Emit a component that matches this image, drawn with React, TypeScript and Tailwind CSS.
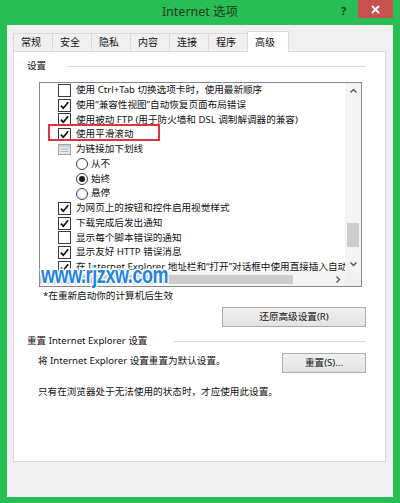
import React from "react";

// --- Internet 选项 / 高级 tab (Windows 8 style dialog, green frame) ---

type Row =
  | { kind: "check"; text: string; checked: boolean }
  | { kind: "group"; text: string }
  | { kind: "radio"; text: string; checked: boolean };

const rows: Row[] = [
  { kind: "check", text: "使用 Ctrl+Tab 切换选项卡时，使用最新顺序", checked: false },
  { kind: "check", text: "使用“兼容性视图”自动恢复页面布局错误", checked: true },
  { kind: "check", text: "使用被动 FTP (用于防火墙和 DSL 调制解调器的兼容)", checked: true },
  { kind: "check", text: "使用平滑滚动", checked: true },
  { kind: "group", text: "为链接加下划线" },
  { kind: "radio", text: "从不", checked: false },
  { kind: "radio", text: "始终", checked: true },
  { kind: "radio", text: "悬停", checked: false },
  { kind: "check", text: "为网页上的按钮和控件启用视觉样式", checked: true },
  { kind: "check", text: "下载完成后发出通知", checked: true },
  { kind: "check", text: "显示每个脚本错误的通知", checked: false },
  { kind: "check", text: "显示友好 HTTP 错误消息", checked: true },
  { kind: "check", text: "在 Internet Explorer 地址栏和“打开”对话框中使用直接插入自动完成", checked: true },
];

const tabs = ["常规", "安全", "隐私", "内容", "连接", "程序", "高级"];
const tabWidths = ["w-[40px]", "w-[40px]", "w-[40px]", "w-[40px]", "w-[40px]", "w-[40px]", "w-[42px]"];

const Checkbox = ({ checked }: { checked: boolean }) => (
  <span className="w-[13px] h-[13px] border border-[#3c3c3c] bg-white flex items-center justify-center shrink-0">
    {checked && (
      <svg width="11" height="11" viewBox="0 0 11 11">
        <path d="M1.8 5.6 L4.3 8.2 L9.2 2.2" fill="none" stroke="#111" strokeWidth="1.7" />
      </svg>
    )}
  </span>
);

const Radio = ({ checked }: { checked: boolean }) => (
  <span className="w-[12px] h-[12px] rounded-full border border-[#3c3c3c] bg-white flex items-center justify-center shrink-0">
    {checked && <span className="w-[6px] h-[6px] rounded-full bg-[#1a1a1a]" />}
  </span>
);

const GroupIcon = () => (
  <svg width="13" height="11" viewBox="0 0 13 11" className="shrink-0">
    <rect x="0.5" y="0.5" width="12" height="10" fill="#e4e8ee" stroke="#9aa3ae" />
    <rect x="1" y="1" width="11" height="2" fill="#c7cfd9" />
    <line x1="2.5" y1="5" x2="10.5" y2="5" stroke="#aeb6c0" />
    <line x1="2.5" y1="7.5" x2="10.5" y2="7.5" stroke="#aeb6c0" />
  </svg>
);

const Chevron = ({ dir }: { dir: "up" | "down" | "right" }) => {
  const d =
    dir === "up" ? "M1.5 5.5 L4.5 2.5 L7.5 5.5" : dir === "down" ? "M1.5 2.5 L4.5 5.5 L7.5 2.5" : "M2.5 1.5 L5.5 4.5 L2.5 7.5";
  return (
    <svg width="9" height="9" viewBox="0 0 9 9">
      <path d={d} fill="none" stroke="#555" strokeWidth="1.4" />
    </svg>
  );
};

const GroupHeader = ({ label, gap }: { label: string; gap: string }) => (
  <div className="flex items-center h-[12px]">
    <span className="whitespace-nowrap">{label}</span>
    <div className={`flex-1 h-px bg-[#dcdcdc] ${gap}`} />
  </div>
);

const Button = ({ label, w }: { label: string; w: string }) => (
  <button className={`${w} h-[20px] border border-[#adadad] bg-gradient-to-b from-[#f0f0f0] to-[#e3e3e3] text-[#111] flex items-center justify-center`}>
    {label}
  </button>
);

export default function App() {
  return (
    <div className="w-[400px] h-[503px] bg-[#29bd55] flex flex-col relative overflow-hidden font-['Noto_Sans','Noto_Sans_CJK_SC',sans-serif] text-[9.6px] text-[#111]">
      {/* 标题栏 */}
      <div className="h-[25px] shrink-0 flex items-start relative">
        <div className="flex-1 h-[25px] flex items-center justify-center text-[12.5px] text-[#183d22]">Internet 选项</div>
        <span className="absolute left-[341px] top-[3px] text-[11px] font-bold text-[#183d22]">?</span>
        <div className="absolute left-[358px] top-0 w-[35px] h-[18px] bg-[#c95050] flex items-center justify-center">
          <svg width="9" height="9" viewBox="0 0 9 9">
            <path d="M1 1 L8 8 M8 1 L1 8" stroke="#fff" strokeWidth="1.8" />
          </svg>
        </div>
      </div>

      {/* 窗体 */}
      <div className="flex-1 mx-[7px] mb-[6px] bg-[#f0f0f0] pt-[6px] pl-[6px] pr-[7px] flex flex-col">
        <div className="h-[20px] flex items-end relative z-10">
          {tabs.map((t, i) => {
            const active = i === tabs.length - 1;
            return (
              <div
                key={t}
                className={`${tabWidths[i]} ${i > 0 ? "-ml-px" : ""} ${
                  active ? "h-[21px] -mb-px bg-white border-[#d9d9d9] border-t border-l border-r -ml-[2px]" : "h-[18px] bg-[#f0f0f0] border-[#d9d9d9] border-t border-l border-r"
                } flex items-center pl-[7px] text-[10px]`}
              >
                {t}
              </div>
            );
          })}
        </div>

        <div className="h-[411px] bg-white border border-[#d9d9d9] pt-[8px] pl-[13px] pr-[19px] flex flex-col">
          <GroupHeader label="设置" gap="ml-[21px]" />

          {/* 设置列表 */}
          <div className="ml-[12px] mt-[10px] w-[323px] h-[205px] border border-[#828790] bg-white flex flex-col">
            <div className="flex-1 flex min-h-0">
              <div className="flex-1 overflow-hidden relative">
                {rows.map((r, i) => (
                  <div key={i} className="h-[14.75px] flex items-center whitespace-nowrap">
                    {r.kind === "check" && (
                      <>
                        <span className="w-[18px] shrink-0" />
                        <Checkbox checked={r.checked} />
                        <span className="ml-[5px]">{r.text}</span>
                      </>
                    )}
                    {r.kind === "group" && (
                      <>
                        <span className="w-[18px] shrink-0" />
                        <GroupIcon />
                        <span className="ml-[5px]">{r.text}</span>
                      </>
                    )}
                    {r.kind === "radio" && (
                      <>
                        <span className="w-[36px] shrink-0" />
                        <Radio checked={r.checked} />
                        <span className="ml-[3px]">{r.text}</span>
                      </>
                    )}
                  </div>
                ))}
                {/* 红框标注 */}
                <div className="absolute left-[8px] top-[41px] w-[112px] h-[17px] border-2 border-[#dc3440]" />
              </div>
              <div className="w-[16px] bg-[#f4f4f4] flex flex-col items-center">
                <div className="h-[16px] flex items-center justify-center">
                  <Chevron dir="up" />
                </div>
                <div className="flex-1 w-full px-[2px] flex flex-col justify-end pb-[9px]">
                  <div className="h-[24px] bg-[#cdcdcd]" />
                </div>
                <div className="h-[16px] flex items-center justify-center">
                  <Chevron dir="down" />
                </div>
              </div>
            </div>
            <div className="h-[14px] flex bg-[#f4f4f4]">
              <div className="flex-1 flex items-center">
                <div className="w-[253px] h-[9px] bg-[#cdcdcd]" />
                <div className="flex-1" />
                <div className="w-[14px] flex items-center justify-center">
                  <Chevron dir="right" />
                </div>
              </div>
              <div className="w-[16px] bg-[#f0f0f0]" />
            </div>
          </div>

          <div className="ml-[16px] mt-[3px] h-[12px] flex items-center">*在重新启动你的计算机后生效</div>

          <div className="mt-[5px] flex justify-end">
            <Button label="还原高级设置(R)" w="w-[144px]" />
          </div>

          <div className="mt-[8px]">
            <GroupHeader label="重置 Internet Explorer 设置" gap="ml-[27px]" />
          </div>

          <div className="mt-[6px] flex items-start justify-between">
            <span className="ml-[11px] mt-[1px]">将 Internet Explorer 设置重置为默认设置。</span>
            <Button label="重置(S)..." w="w-[84px]" />
          </div>

          <div className="ml-[11px] mt-[12px]">只有在浏览器处于无法使用的状态时，才应使用此设置。</div>
        </div>
      </div>

      {/* 水印 */}
      <div className="absolute left-[41px] top-[264px] text-[23px] font-bold tracking-[-0.5px] text-[#1f86dc] font-['Liberation_Sans',sans-serif] [-webkit-text-stroke:3px_white] [paint-order:stroke_fill] origin-left scale-x-[0.78] leading-none">
        www.rjzxw.com
      </div>
    </div>
  );
}
